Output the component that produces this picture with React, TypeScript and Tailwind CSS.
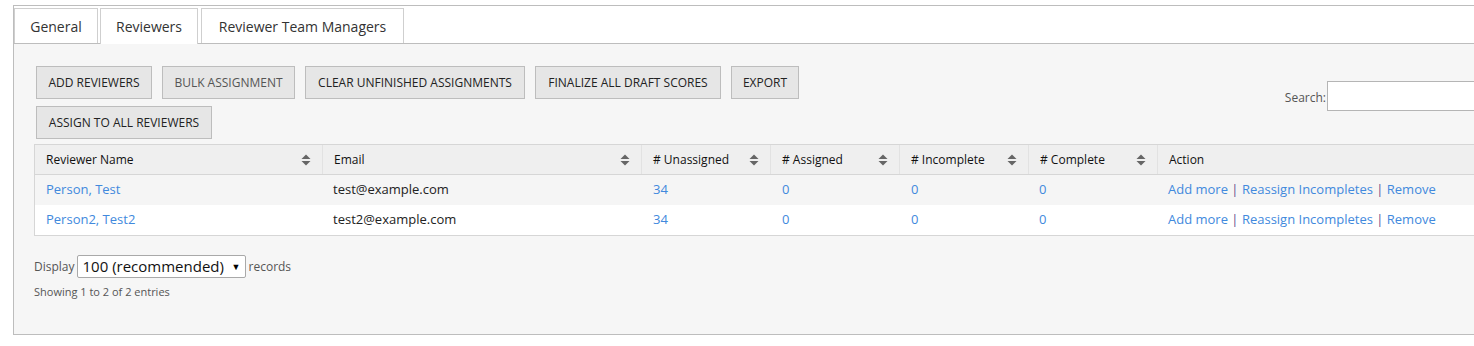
import React from "react";

const SortIcon = () => (
  <svg width="10" height="12" viewBox="0 0 10 12" className="shrink-0">
    <path d="M5 0.5 L9.5 5 L0.5 5 Z" fill="#666" />
    <path d="M5 11.5 L9.5 7 L0.5 7 Z" fill="#666" />
  </svg>
);

const buttons1 = [
  { label: "ADD REVIEWERS", w: "w-[116px]", muted: false },
  { label: "BULK ASSIGNMENT", w: "w-[133px]", muted: true },
  { label: "CLEAR UNFINISHED ASSIGNMENTS", w: "w-[220px]", muted: false },
  { label: "FINALIZE ALL DRAFT SCORES", w: "w-[186px]", muted: false },
  { label: "EXPORT", w: "w-[68px]", muted: false },
];

const Btn = ({ label, w, muted }: { label: string; w: string; muted?: boolean }) => (
  <button
    className={`${w} h-[33px] border border-[#bdbdbd] bg-[#e6e6e6] text-[12px] leading-none ${
      muted ? "text-[#555]" : "text-[#222]"
    } flex items-center justify-center`}
  >
    {label}
  </button>
);

const cols = [
  { label: "Reviewer Name", w: "w-[288px]", sort: true },
  { label: "Email", w: "w-[319px]", sort: true },
  { label: "# Unassigned", w: "w-[129px]", sort: true },
  { label: "# Assigned", w: "w-[129px]", sort: true },
  { label: "# Incomplete", w: "w-[129px]", sort: true },
  { label: "# Complete", w: "w-[129px]", sort: true },
  { label: "Action", w: "flex-1", sort: false },
];

const rows = [
  { name: "Person, Test", email: "test@example.com", bg: "bg-[#f5f5f5]" },
  { name: "Person2, Test2", email: "test2@example.com", bg: "bg-white" },
];

export default function App() {
  return (
    <div
      className="w-[1474px] h-[346px] overflow-hidden bg-white"
      style={{ fontFamily: '"Open Sans", sans-serif' }}
    >
      <div className="ml-[13px] mt-[5px] w-[1470px] h-[330px] border-t border-l border-b border-[#bdbdbd] flex flex-col">
        {/* Tabs */}
        <div className="flex items-end h-[38px] border-b border-[#bdbdbd] bg-white">
          <div className="h-[35px] w-[84px] border border-b-0 border-[#cfcfcf] flex items-center justify-center text-[14px] text-[#333]">
            General
          </div>
          <div className="ml-[2px] h-[36px] w-[98px] border border-[#cfcfcf] border-b-0 bg-white flex items-center justify-center text-[14px] text-[#333] -mb-px relative">
            Reviewers
          </div>
          <div className="ml-[3px] h-[35px] w-[203px] border border-b-0 border-[#cfcfcf] flex items-center justify-center text-[14px] text-[#333]">
            Reviewer Team Managers
          </div>
        </div>

        {/* Content */}
        <div className="flex-1 bg-[#f6f6f6] pl-[20px] pt-[22px]">
          <div className="flex items-start">
            <div className="flex flex-col gap-[7px] pl-[2px]">
              <div className="flex gap-[10px]">
                {buttons1.map((b) => (
                  <Btn key={b.label} {...b} />
                ))}
              </div>
              <div className="flex">
                <Btn label="ASSIGN TO ALL REVIEWERS" w="w-[176px]" />
              </div>
            </div>
            <div className="ml-auto mt-[15px] flex items-center">
              <span className="text-[12px] text-[#555] mr-px mt-[3px]">Search:</span>
              <div className="w-[156px] h-[30px] border border-[#b5b5b5] bg-white" />
            </div>
          </div>

          {/* Table */}
          <div className="mt-[5px] border-t border-l border-b border-[#d6d6d6] bg-white">
            <div className="flex h-[30px] bg-[#efefef] border-b border-[#d6d6d6]">
              {cols.map((c, i) => (
                <div
                  key={c.label}
                  className={`${c.w} flex items-center justify-between pl-[11px] pr-[11px] text-[12px] text-[#111] ${
                    i < cols.length - 1 ? "border-r border-[#e2e2e2]" : ""
                  }`}
                >
                  <span>{c.label}</span>
                  {c.sort && <SortIcon />}
                </div>
              ))}
            </div>
            {rows.map((r) => (
              <div key={r.name} className={`flex h-[30px] items-center text-[13px] ${r.bg}`}>
                <div className="w-[288px] pl-[11px] text-[#4189dd]">{r.name}</div>
                <div className="w-[319px] pl-[10px] text-[#222]">{r.email}</div>
                <div className="w-[129px] pl-[11px] text-[#4189dd]">34</div>
                <div className="w-[129px] pl-[11px] text-[#4189dd]">0</div>
                <div className="w-[129px] pl-[11px] text-[#4189dd]">0</div>
                <div className="w-[129px] pl-[10px] text-[#4189dd]">0</div>
                <div className="flex-1 pl-[10px] text-[#4189dd] whitespace-nowrap">
                  Add more <span className="text-[#6a4a8c]">|</span> Reassign Incompletes{" "}
                  <span className="text-[#6a4a8c]">|</span> Remove
                </div>
              </div>
            ))}
          </div>

          {/* Footer */}
          <div className="mt-[19px] flex items-center text-[12px] text-[#555]">
            <span className="mr-[2px]">Display</span>
            <div className="w-[169px] h-[23px] border border-[#a9a9a9] rounded-[2px] bg-white flex items-center pl-[5px] pr-[4px] text-[15px] text-[#111]">
              <span>100 (recommended)</span>
              <span className="ml-auto text-[9px] text-black">▼</span>
            </div>
            <span className="ml-[3px]">records</span>
          </div>
          <div className="mt-[6px] text-[11px] text-[#555]">Showing 1 to 2 of 2 entries</div>
        </div>
      </div>
    </div>
  );
}
